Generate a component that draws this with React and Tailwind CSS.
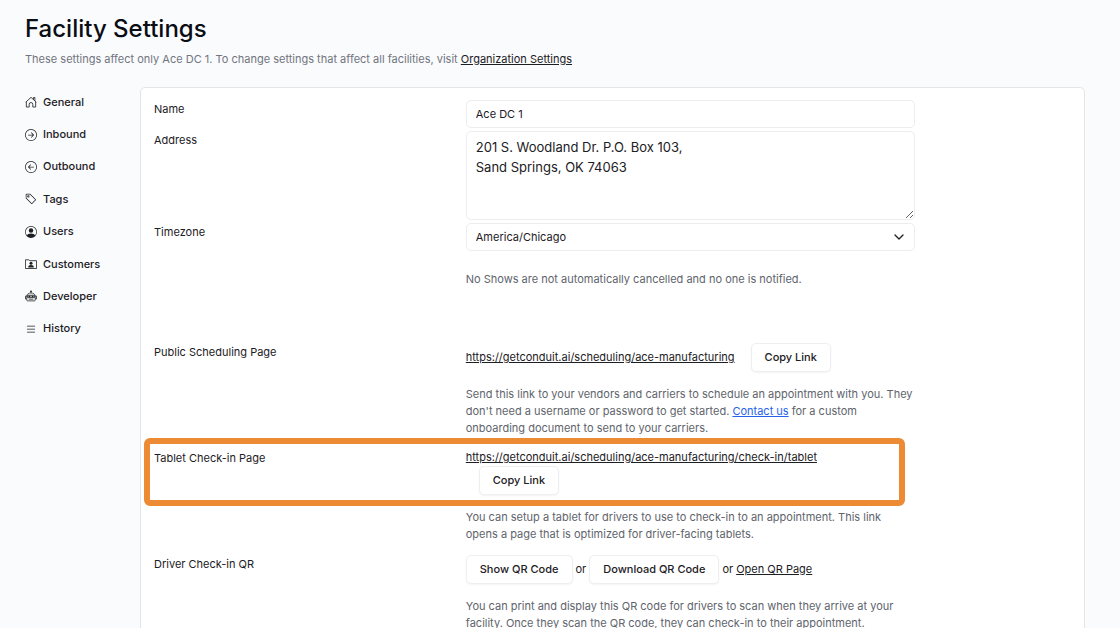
import React, { useState } from 'react';
import { BsArrowLeftCircle, BsArrowRightCircle, BsPersonCircle, BsTag, BsList } from 'react-icons/bs';
import { ChevronDown } from 'lucide-react';

const HomeIcon = (props) => (
  <svg viewBox="0 0 16 16" fill="none" stroke="currentColor" strokeWidth="1.1" {...props}>
    <path d="M1 8.2 8 1.8l7 6.4" />
    <path d="M11.3 4.6V2h1.9v4.4" />
    <path d="M1.8 7.6v7.1h3.8v-3.6a2.4 2.4 0 0 1 4.8 0v3.6h3.8V7.6" />
  </svg>
);

const CustomersIcon = (props) => (
  <svg viewBox="0 0 16 16" fill="none" stroke="currentColor" strokeWidth="1.1" {...props}>
    <path d="M.6 14V2.4h4.6l1.2 1.2h9V14z" />
    <circle cx="8" cy="7" r="2" fill="currentColor" stroke="none" />
    <path d="M4.2 12.6c0-2.2 1.6-3.2 3.8-3.2s3.8 1 3.8 3.2z" fill="currentColor" stroke="none" />
  </svg>
);

const RobotIcon = (props) => (
  <svg viewBox="0 0 16 16" fill="none" stroke="currentColor" strokeWidth="1" {...props}>
    <path d="M8 1.5V4" />
    <circle cx="8" cy="1.8" r="1.2" fill="currentColor" stroke="none" />
    <path d="M2.4 13.6V8.4C2.4 5.6 4.8 4 8 4s5.6 1.6 5.6 4.4v5.2c0 .5-.4.9-.9.9H3.3c-.5 0-.9-.4-.9-.9z" />
    <path d="M2.4 8H.7v4h1.7M13.6 8h1.7v4h-1.7" />
    <rect x="3.2" y="7" width="9.6" height="3.2" rx="1" fill="currentColor" fillOpacity="0.35" />
    <circle cx="5.8" cy="8.6" r="1.1" fill="currentColor" stroke="none" />
    <circle cx="10.2" cy="8.6" r="1.1" fill="currentColor" stroke="none" />
    <path d="M5 12.3h6" />
  </svg>
);

const navItems = [
  { label: 'General', icon: HomeIcon },
  { label: 'Inbound', icon: BsArrowRightCircle },
  { label: 'Outbound', icon: BsArrowLeftCircle },
  { label: 'Tags', icon: BsTag },
  { label: 'Users', icon: BsPersonCircle },
  { label: 'Customers', icon: CustomersIcon },
  { label: 'Developer', icon: RobotIcon },
  { label: 'History', icon: BsList },
];

const Row = ({ label, htmlFor, help, children }) => (
  <div className="flex">
    <div className="w-[34%] shrink-0 pt-px">
      {htmlFor ? <label htmlFor={htmlFor} className="block">{label}</label> : <h2>{label}</h2>}
    </div>
    <div className="w-[49%]">
      {children}
      {help && <p className="mt-3.5 text-[#60646c]">{help}</p>}
    </div>
  </div>
);

const Button = ({ children, className = '', ...props }) => (
  <button
    type="button"
    className={`h-[29px] rounded-[5px] border border-[#efeff1] bg-white px-[13px] font-medium shadow-xs hover:bg-gray-50 ${className}`}
    {...props}
  >
    {children}
  </button>
);

const App = () => {
  const [name, setName] = useState('Ace DC 1');
  const [address, setAddress] = useState('201 S. Woodland Dr. P.O. Box 103,\nSand Springs, OK 74063');
  const [timezone, setTimezone] = useState('America/Chicago');

  const copyLink = (path) => navigator.clipboard?.writeText(`https://getconduit.ai/scheduling/${path}`);

  return (
    <div className="min-h-screen bg-[#fafbfd] pt-[11px] pr-[35px] pl-[25px] font-['Inter',sans-serif] text-[11px] leading-[17px] text-[#1c2024]">
      <header>
        <h1 className="text-[24px] leading-9 font-medium text-[#0b0d14]">Facility Settings</h1>
        <p className="mt-1 text-[#71757e]">
          These settings affect only Ace DC 1. To change settings that affect all facilities, visit{' '}
          <a href="#organization" className="text-[#1c2024] underline">Organization Settings</a>
        </p>
      </header>

      <div className="mt-[19px] flex items-start">
        <nav className="-mt-px flex h-[259px] w-[115px] shrink-0 flex-col">
          {navItems.map(({ label, icon: Icon }) => (
            <a key={label} href={`#${label.toLowerCase()}`} className="flex flex-1 items-center gap-1.5 font-medium">
              <Icon className="size-3" />
              {label}
            </a>
          ))}
        </nav>

        <main className="min-w-0 flex-1 rounded-[5px] border border-[#e4e5e9] bg-white px-[13px] py-3">
          <div className="flex flex-col gap-[3px]">
            <Row label="Name" htmlFor="name">
              <input
                id="name"
                value={name}
                onChange={(e) => setName(e.target.value)}
                className="block h-7 w-full rounded-[5px] border border-[#ededf0] bg-white px-[9px]"
              />
            </Row>
            <Row label="Address" htmlFor="address">
              <textarea
                id="address"
                value={address}
                onChange={(e) => setAddress(e.target.value)}
                className="block h-[89px] w-full rounded-[5px] border border-[#ededf0] bg-white px-[9px] py-[5px] text-[13px] leading-5"
              />
            </Row>
            <Row label="Timezone" htmlFor="timezone">
              <div className="relative">
                <select
                  id="timezone"
                  value={timezone}
                  onChange={(e) => setTimezone(e.target.value)}
                  className="block h-7 w-full appearance-none rounded-[5px] border border-[#ededf0] bg-white px-[9px]"
                >
                  <option>America/Chicago</option>
                  <option>America/Denver</option>
                  <option>America/New_York</option>
                </select>
                <ChevronDown className="pointer-events-none absolute top-1.5 right-2 size-4" />
              </div>
              <p className="mt-5 text-[#60646c]">No Shows are not automatically cancelled and no one is notified.</p>
            </Row>
          </div>

          <div className="mt-[55px] flex flex-col gap-3">
            <Row
              label="Public Scheduling Page"
              help={
                <>
                  Send this link to your vendors and carriers to schedule an appointment with you. They don't need a
                  username or password to get started.{' '}
                  <a href="#contact" className="text-[#2563eb] underline">Contact us</a> for a custom onboarding
                  document to send to your carriers.
                </>
              }
            >
              <div className="flex items-center gap-4">
                <a href="#scheduling" className="underline">https://getconduit.ai/scheduling/ace-manufacturing</a>
                <Button onClick={() => copyLink('ace-manufacturing')}>Copy Link</Button>
              </div>
            </Row>

            <div className="relative">
              <Row
                label="Tablet Check-in Page"
                help="You can setup a tablet for drivers to use to check-in to an appointment. This link opens a page that is optimized for driver-facing tablets."
              >
                <a href="#tablet" className="block underline">
                  https://getconduit.ai/scheduling/ace-manufacturing/check-in/tablet
                </a>
                <Button className="ml-[13px] block" onClick={() => copyLink('ace-manufacturing/check-in/tablet')}>
                  Copy Link
                </Button>
              </Row>
              <div className="pointer-events-none absolute -top-[11px] -left-[10px] h-[68px] w-[83%] rounded-md border-[6px] border-[#ec8b33]" />
            </div>

            <Row
              label="Driver Check-in QR"
              help="You can print and display this QR code for drivers to scan when they arrive at your facility. Once they scan the QR code, they can check-in to their appointment."
            >
              <div className="flex items-center gap-[3px]">
                <Button>Show QR Code</Button>
                <span>or</span>
                <Button>Download QR Code</Button>
                <span>or</span>
                <a href="#qr" className="underline">Open QR Page</a>
              </div>
            </Row>
          </div>
        </main>
      </div>
    </div>
  );
};

export default App;
